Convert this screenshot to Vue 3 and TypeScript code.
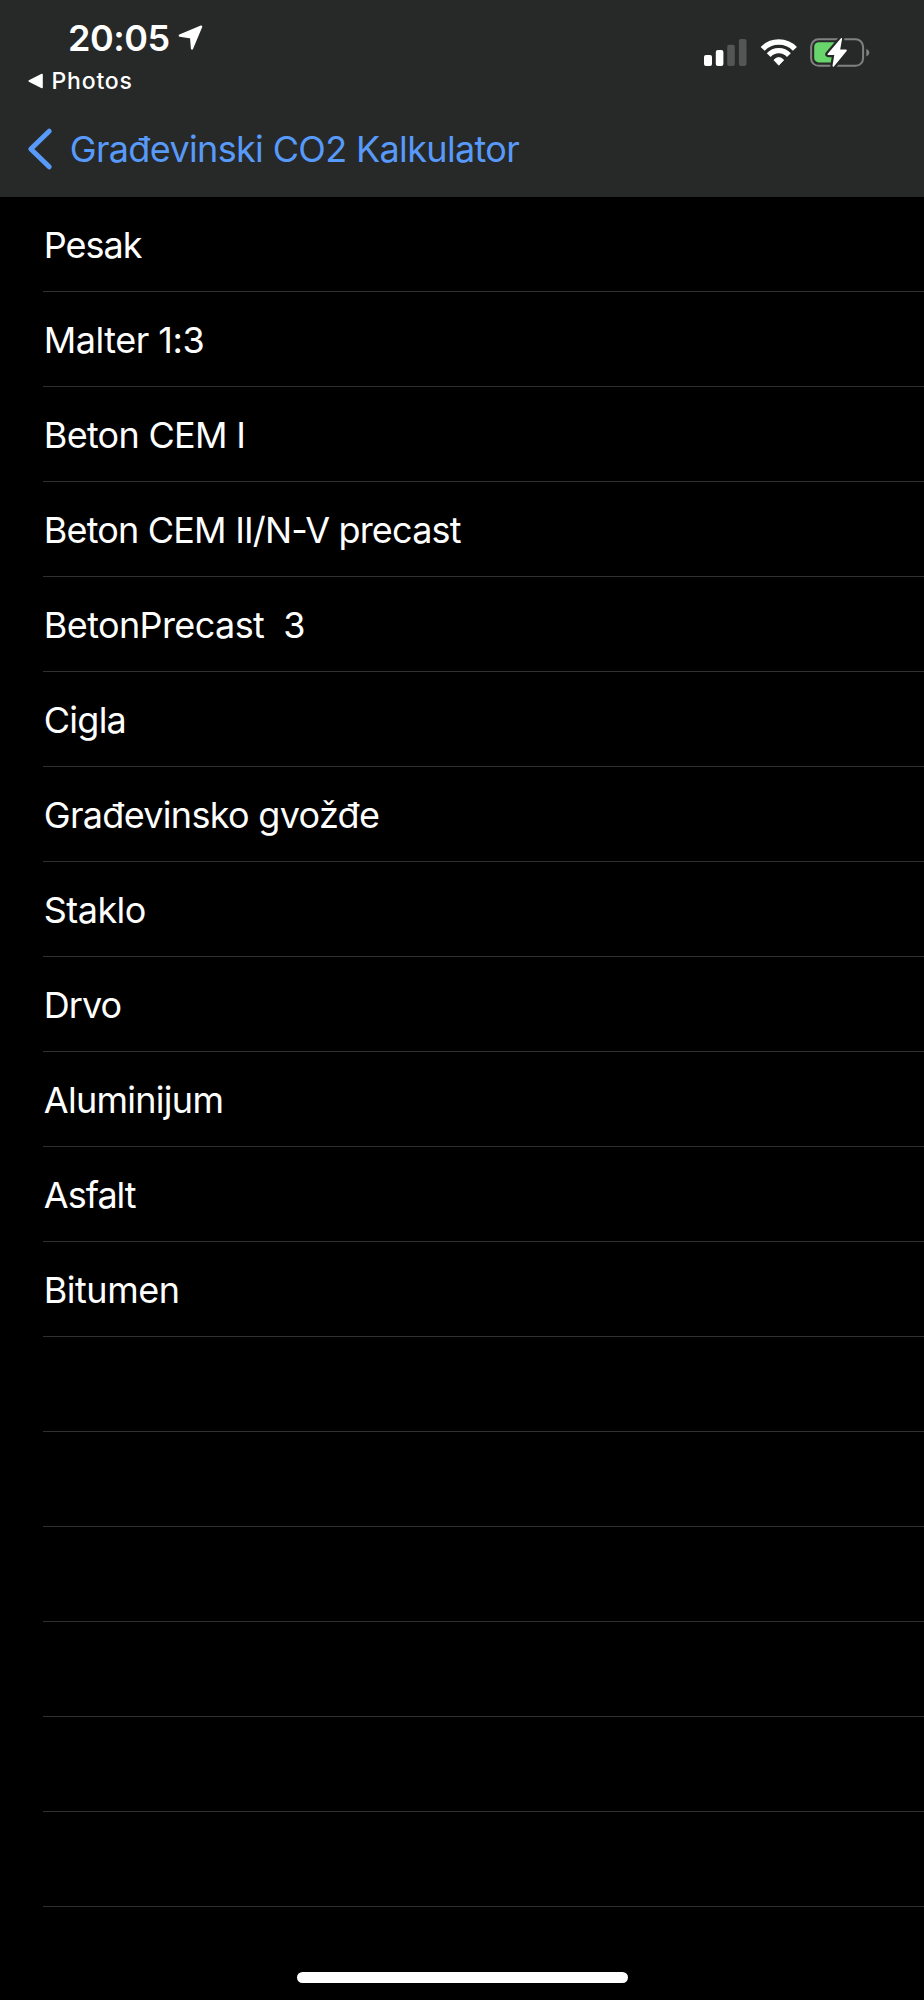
<script setup lang="ts">
interface Material {
  name: string
  /** letter spacing in px */
  tracking: number
}

const materials: Material[] = [
  { name: 'Pesak', tracking: -1.0 },
  { name: 'Malter 1:3', tracking: -0.5 },
  { name: 'Beton CEM I', tracking: -0.72 },
  { name: 'Beton CEM II/N-V precast', tracking: -0.82 },
  { name: 'BetonPrecast  3', tracking: -0.6 },
  { name: 'Cigla', tracking: -0.75 },
  { name: 'Građevinsko gvožđe', tracking: -0.69 },
  { name: 'Staklo', tracking: -0.55 },
  { name: 'Drvo', tracking: -0.95 },
  { name: 'Aluminijum', tracking: -0.72 },
  { name: 'Asfalt', tracking: -1.0 },
  { name: 'Bitumen', tracking: -0.5 },
]
const emptyRows = 6
</script>

<template>
  <div class="screen">
    <header class="top">
      <div class="status">
        <div class="status-left">
          <div class="clock">
            <span class="time">20:05</span>
            <svg class="arrow" width="25" height="26" viewBox="0 0 25 26">
              <path d="M1.8 10.6 L23.2 1.6 L14 23.6 L13.1 12.5 Z" fill="#fff" stroke="#fff" stroke-width="2.2" stroke-linejoin="round" />
            </svg>
          </div>
          <div class="return">
            <svg width="16" height="16" viewBox="0 0 16 16">
              <path d="M1.2 8 L14 1.5 V14.5 Z" fill="#fff" stroke="#fff" stroke-width="1.6" stroke-linejoin="round" />
            </svg>
            <span class="return-label">Photos</span>
          </div>
        </div>
        <div class="status-right">
          <svg width="43" height="30" viewBox="704 38 43 30">
            <rect x="704" y="55" width="8" height="11" rx="2" fill="#fff" />
            <rect x="715.8" y="50" width="7.6" height="16" rx="2" fill="#fff" />
            <rect x="727.2" y="44.7" width="7.6" height="21.3" rx="2" fill="#545655" />
            <rect x="738.9" y="39" width="7.6" height="27" rx="2" fill="#545655" />
          </svg>
          <svg width="38" height="30" viewBox="759.5 38 38 30">
            <g fill="none" stroke="#fff">
              <path d="M762.2 48.9 A22.4 22.4 0 0 1 794.4 48.9" stroke-width="5.6" />
              <path d="M768.2 55.1 A13.8 13.8 0 0 1 788.4 55.1" stroke-width="5.3" />
            </g>
            <path d="M773.4 60 Q778.3 55.2 783.2 60 L778.3 65.2 Z" fill="#fff" stroke="#fff" stroke-width="0.9" stroke-linejoin="round" />
          </svg>
          <svg width="60" height="31" viewBox="810 38 60 31">
            <rect x="811.1" y="39.3" width="52" height="26.5" rx="7.5" fill="none" stroke="#808281" stroke-width="2" />
            <path d="M866.3 48.7 Q869.3 50 869.3 52.6 Q869.3 55.3 866.3 56.6 Z" fill="#808281" />
            <rect x="814.2" y="42.2" width="23.5" height="20.2" rx="4.5" fill="#68d66b" />
            <path d="M841.3 38.9 L828.3 54.3 H835.2 L833.3 66 L846 50.4 H839.2 Z" fill="#272928" stroke="#272928" stroke-width="6" stroke-linejoin="round" />
            <path d="M841.3 38.9 L828.3 54.3 H835.2 L833.3 66 L846 50.4 H839.2 Z" fill="#fff" stroke="#fff" stroke-width="1.6" stroke-linejoin="round" />
          </svg>
        </div>
      </div>
      <nav class="nav">
        <svg width="26" height="44" viewBox="0 0 26 44">
          <path d="M22.2 4.2 L3.8 22 L22.2 39.8" fill="none" stroke="#589afa" stroke-width="5" stroke-linecap="round" stroke-linejoin="round" />
        </svg>
        <span class="back-title">Građevinski CO2 Kalkulator</span>
      </nav>
    </header>

    <ul class="list">
      <li v-for="m in materials" :key="m.name" class="row" :style="{ letterSpacing: m.tracking + 'px' }">{{ m.name }}</li>
      <li v-for="n in emptyRows" :key="n" class="row"></li>
    </ul>

    <footer class="bottom">
      <div class="home-indicator"></div>
    </footer>
  </div>
</template>

<style>
body {
  background: #000;
}
</style>

<style scoped>
.screen {
  display: flex;
  flex-direction: column;
  width: 924px;
  height: 2000px;
  overflow: hidden;
  background: #000;
  color: #fff;
  font-family: Inter, "Liberation Sans", sans-serif;
  font-size: 36px;
  line-height: 44px;
}
svg {
  display: block;
  flex: none;
}
.top {
  box-sizing: border-box;
  height: 197px;
  padding-top: 16px;
  background: #272928;
}
.status {
  display: flex;
  justify-content: space-between;
  height: 111px;
}
.clock {
  display: flex;
  padding-left: 68px;
}
.time {
  width: 110px;
  font-weight: 600;
  letter-spacing: -0.5px;
}
.arrow {
  margin-top: 9px;
}
.return {
  display: flex;
  align-items: center;
  gap: 8px;
  margin-top: 7px;
  padding-left: 27.5px;
  height: 28px;
}
.return-label {
  font-size: 23px;
  line-height: 28px;
  font-weight: 500;
  letter-spacing: 0.8px;
}
.status-right {
  display: flex;
  align-items: flex-start;
  gap: 12.5px;
  padding-top: 22px;
  padding-right: 54px;
}
.nav {
  display: flex;
  padding-left: 27px;
  color: #589afa;
}
.back-title {
  margin-left: 16.7px;
  letter-spacing: -0.65px;
}
.list {
  margin: 0;
  padding: 0 0 0 43px;
  list-style: none;
}
.row {
  box-sizing: border-box;
  height: 95px;
  padding-top: 26px;
  text-indent: 0.8px;
  border-bottom: 1px solid #303032;
  white-space: pre;
}
.bottom {
  display: flex;
  justify-content: center;
  padding-top: 65px;
}
.home-indicator {
  width: 331px;
  height: 11px;
  border-radius: 6px;
  background: #fff;
}
</style>
